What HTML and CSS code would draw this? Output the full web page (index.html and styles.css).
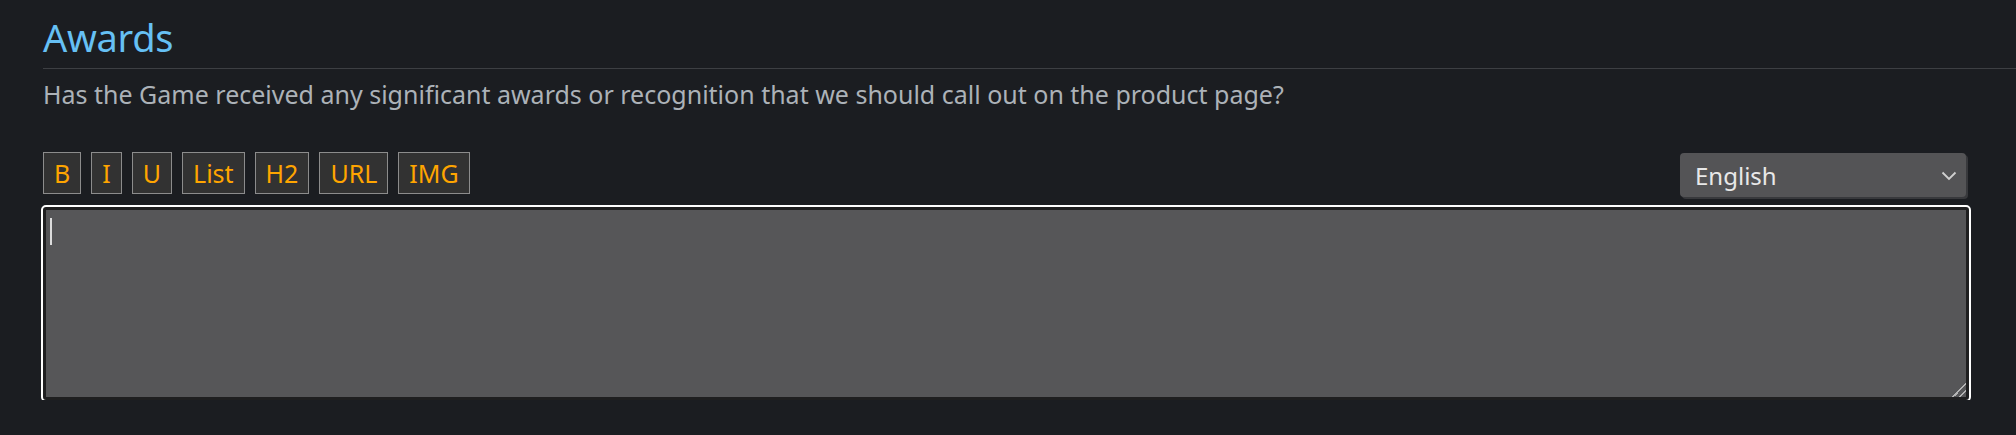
FILE: index.html
```html
<!DOCTYPE html>
<html lang="en">
<head>
<meta charset="utf-8">
<title>Awards</title>
<link rel="stylesheet" href="styles.css">
</head>
<body>
<section class="section">
  <h2 class="title">Awards</h2>
  <p class="desc">Has the Game received any significant awards or recognition that we should call out on the product page?</p>
  <div class="editor">
    <div class="toolbar">
      <div class="tools">
        <button class="tool" type="button">B</button>
        <button class="tool" type="button">I</button>
        <button class="tool" type="button">U</button>
        <button class="tool" type="button">List</button>
        <button class="tool" type="button">H2</button>
        <button class="tool" type="button">URL</button>
        <button class="tool" type="button">IMG</button>
      </div>
      <div class="lang">
        <select class="lang-select">
          <option>English</option>
        </select>
        <svg class="chev" width="16" height="10" viewBox="0 0 16 10"><path d="M1.5 1.5 L8 8 L14.5 1.5" fill="none" stroke="#d0d0d0" stroke-width="1.8"/></svg>
      </div>
    </div>
    <div class="field">
      <textarea class="text"></textarea>
      <span class="caret"></span>
    </div>
  </div>
</section>
</body>
</html>
```

FILE: styles.css
```css
html, body {
  margin: 0;
  padding: 0;
  background: #1b1d21;
}

body {
  font-family: "Noto Sans", "Open Sans", sans-serif;
}

.section {
  padding-left: 43px;
}

.title {
  margin: 0;
  padding: 13px 0 7px;
  font-size: 38px;
  line-height: 48px;
  font-weight: 400;
  letter-spacing: -0.3px;
  color: #66c0f4;
  border-bottom: 1px solid #3d3f43;
}

.desc {
  margin: 9px 0 0;
  font-size: 25px;
  line-height: 32px;
  color: #acb2b8;
}

.editor {
  margin-right: 47px;
}

.toolbar {
  display: flex;
  justify-content: space-between;
  align-items: flex-start;
  margin-top: 42px;
}

.tools {
  display: flex;
  gap: 10px;
}

.tool {
  margin: 0;
  padding: 0 10px;
  height: 42px;
  border: 1px solid #8c8c8c;
  background: #323232;
  color: #ffa500;
  font-family: "Noto Sans", "Open Sans", sans-serif;
  font-size: 25px;
  line-height: 40px;
}

.lang {
  position: relative;
  margin-top: 1px;
  margin-right: 3px;
}

.lang-select {
  appearance: none;
  -webkit-appearance: none;
  display: block;
  width: 286px;
  height: 44px;
  margin: 0;
  padding: 0 40px 0 15px;
  border: none;
  border-radius: 4px;
  background: #545456;
  box-shadow: 2px 2px 0 #38393c;
  color: #e8e8e8;
  font-family: "Noto Sans", "Open Sans", sans-serif;
  font-size: 24px;
  outline: none;
}

.chev {
  position: absolute;
  right: 9px;
  top: 18px;
  pointer-events: none;
}

.field {
  position: relative;
  margin-top: 10px;
}

.text {
  display: block;
  box-sizing: border-box;
  width: 100%;
  height: 193px;
  margin: 0;
  padding: 4px;
  border: 3px solid #1f1f20;
  border-radius: 3px;
  background: #565658;
  color: #e8e8e8;
  font-family: "Noto Sans", "Open Sans", sans-serif;
  font-size: 24px;
  outline: 2px solid #ffffff;
  outline-offset: 0;
  resize: vertical;
}

.text::-webkit-scrollbar {
  width: 15px;
  height: 15px;
  background: transparent;
}

.text::-webkit-resizer {
  background: linear-gradient(135deg,
    transparent 0 52%,
    #b4b4b4 52% 60%,
    transparent 60% 74%,
    #b4b4b4 74% 82%,
    transparent 82%);
}

.caret {
  position: absolute;
  left: 7px;
  top: 11px;
  width: 2px;
  height: 27px;
  background: #dcdcdc;
}
```
